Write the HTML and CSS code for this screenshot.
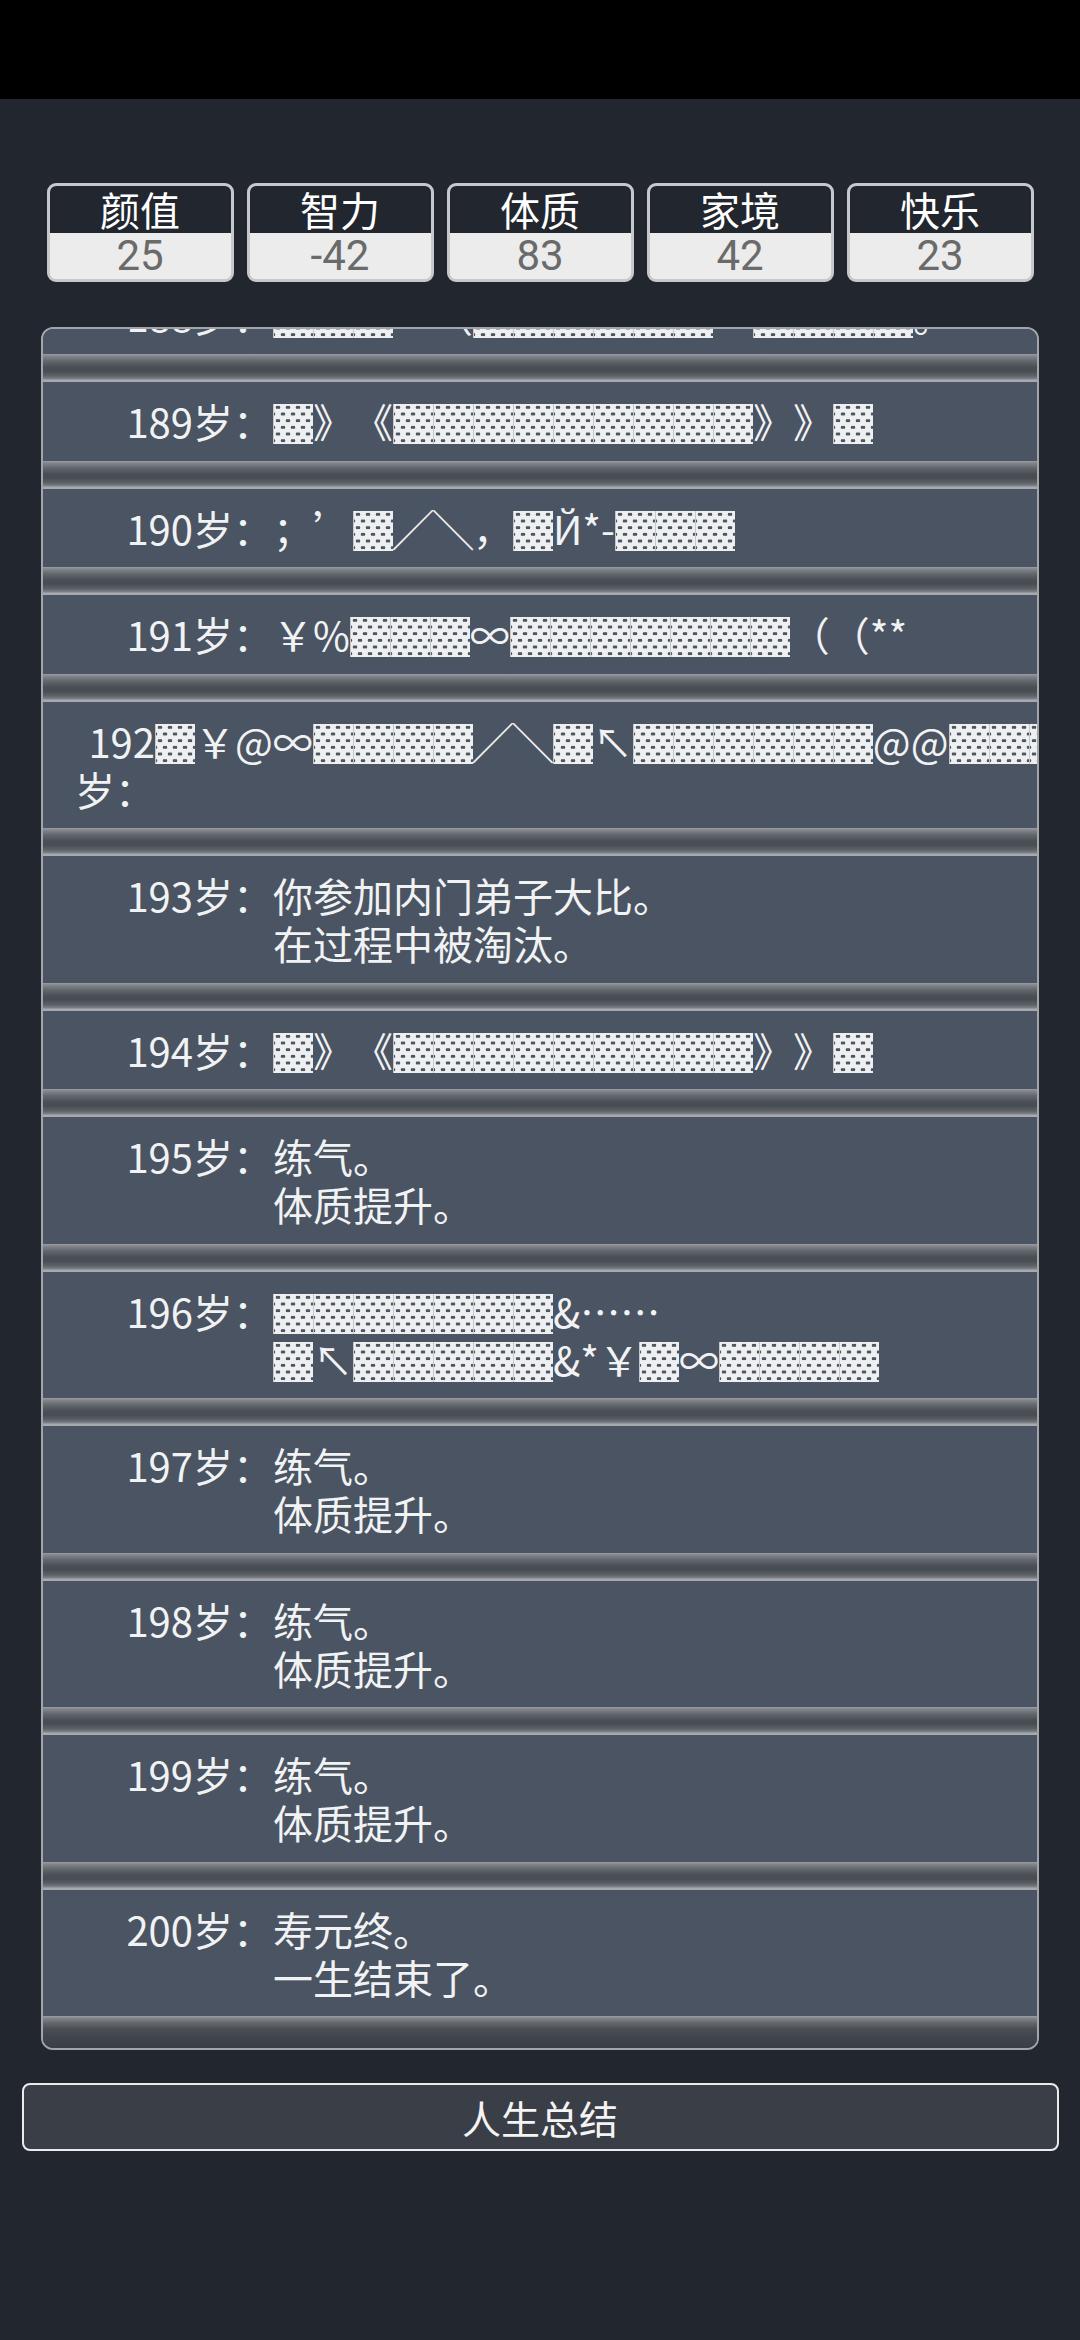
FILE: index.html
```html
<!DOCTYPE html>
<html lang="zh-CN">
<head>
<meta charset="utf-8">
<title>人生重开</title>
<link rel="stylesheet" href="styles.css">
</head>
<body>
<div class="statusbar"></div>
<main class="page">
  <section class="stats">
    <div class="stat"><div class="stat-name">颜值</div><div class="stat-value">25</div></div>
    <div class="stat"><div class="stat-name">智力</div><div class="stat-value">-42</div></div>
    <div class="stat"><div class="stat-name">体质</div><div class="stat-value">83</div></div>
    <div class="stat"><div class="stat-name">家境</div><div class="stat-value">42</div></div>
    <div class="stat"><div class="stat-name">快乐</div><div class="stat-value">23</div></div>
  </section>

  <ul class="panel">
    <li class="event"><div class="row"><span class="age">188岁：</span><span class="text"><span class="shade">▓▓▓</span>　（<span class="shade">▓▓▓▓▓▓</span>　<span class="shade">▓▓▓▓</span>。</span></div></li>
    <li class="event"><div class="row"><span class="age">189岁：</span><span class="text"><span class="shade">▓</span>》《<span class="shade">▓▓▓▓▓▓▓▓▓</span>》》<span class="shade">▓</span></span></div></li>
    <li class="event"><div class="row"><span class="age">190岁：</span><span class="text">；’<span class="shade">▓</span>╱╲，<span class="shade">▓</span>Й*-<span class="shade">▓▓▓</span></span></div></li>
    <li class="event"><div class="row"><span class="age">191岁：</span><span class="text">￥%<span class="shade">▓▓▓</span>∞<span class="shade">▓▓▓▓▓▓▓</span>（（**</span></div></li>
    <li class="event"><div class="row"><span class="age">192岁：</span><span class="text"><span class="shade">▓</span>￥@∞<span class="shade">▓▓▓▓</span>╱╲<span class="shade">▓</span>↖<span class="shade">▓▓▓▓▓▓</span>@@<span class="shade">▓▓▓▓▓▓</span></span></div></li>
    <li class="event"><div class="row"><span class="age">193岁：</span><span class="text">你参加内门弟子大比。<br>在过程中被淘汰。</span></div></li>
    <li class="event"><div class="row"><span class="age">194岁：</span><span class="text"><span class="shade">▓</span>》《<span class="shade">▓▓▓▓▓▓▓▓▓</span>》》<span class="shade">▓</span></span></div></li>
    <li class="event"><div class="row"><span class="age">195岁：</span><span class="text">练气。<br>体质提升。</span></div></li>
    <li class="event"><div class="row"><span class="age">196岁：</span><span class="text"><span class="shade">▓▓▓▓▓▓▓</span>&amp;……<br><span class="shade">▓</span>↖<span class="shade">▓▓▓▓▓</span>&amp;*￥<span class="shade">▓</span>∞<span class="shade">▓▓▓▓</span></span></div></li>
    <li class="event"><div class="row"><span class="age">197岁：</span><span class="text">练气。<br>体质提升。</span></div></li>
    <li class="event"><div class="row"><span class="age">198岁：</span><span class="text">练气。<br>体质提升。</span></div></li>
    <li class="event"><div class="row"><span class="age">199岁：</span><span class="text">练气。<br>体质提升。</span></div></li>
    <li class="event"><div class="row"><span class="age">200岁：</span><span class="text">寿元终。<br>一生结束了。</span></div></li>
  </ul>

  <button class="summary" type="button">人生总结</button>
</main>
</body>
</html>
```

FILE: styles.css
```css
* {
  box-sizing: border-box;
}

html,
body {
  margin: 0;
  padding: 0;
}

body {
  width: 1080px;
  height: 2340px;
  overflow: hidden;
  background: #22262e;
  color: #f1f2f3;
  font-family: "Noto Sans CJK SC", sans-serif;
  text-spacing-trim: space-all;
}

.statusbar {
  height: 99px;
  background: #000;
}

.page {
  display: flex;
  flex-direction: column;
  align-items: center;
}

/* ---------- attribute boxes ---------- */
.stats {
  display: flex;
  justify-content: center;
  gap: 13px;
  margin-top: 84px;
}

.stat {
  width: 187px;
  height: 99px;
  border: 3px solid #c6c8cb;
  border-radius: 9px;
  background: #ececec;
  display: flex;
  flex-direction: column;
}

.stat-name {
  height: 47px;
  flex: none;
  border-radius: 6px 6px 0 0;
  background: #22262e;
  color: #fff;
  font-size: 40px;
  line-height: 46px;
  text-align: center;
}

.stat-value {
  flex: 1;
  border-radius: 0 0 6px 6px;
  background: #ececec;
  color: #6a6a6a;
  font-family: Roboto, "Noto Sans CJK SC", sans-serif;
  font-weight: 400;
  font-size: 42px;
  line-height: 46px;
  text-align: center;
}

/* ---------- event list ---------- */
.panel {
  width: 998px;
  height: 1723px;
  margin: 45px 0 0;
  padding: 0;
  list-style: none;
  border: 2px solid #a2a5aa;
  border-radius: 12px;
  overflow: hidden;
  background: #3a3e46;
  display: flex;
  flex-direction: column;
  justify-content: flex-end;
}

.event {
  flex: none;
  padding-bottom: 28px;
  background: linear-gradient(to bottom,
      #9a9ea3 0,
      #83878d 2px,
      #62666d 7px,
      #4a4e55 13px,
      #484c53 17px,
      #5e6269 22px,
      #80848a 25px,
      #a6a9ad 26px,
      #a6a9ad 28px) left bottom / 100% 28px no-repeat #4a5462;
}

.event:last-child {
  padding-bottom: 32px;
  background: linear-gradient(to bottom,
      #9a9ea3 0,
      #83878d 2px,
      #62666d 7px,
      #4a4e55 13px,
      #41454c 20px,
      #3a3e46 32px) left bottom / 100% 32px no-repeat #4a5462;
}

.row {
  display: flex;
  padding: 15px 0 15.5px 32px;
  font-size: 40px;
  line-height: 48px;
}

.age {
  flex: 0 1 198px;
  text-align: right;
}

.text {
  white-space: nowrap;
}

/* the "▓" shade blocks, drawn as a light dotted tile */
.shade {
  display: inline-block;
  height: 40px;
  line-height: 40px;
  vertical-align: -3px;
  color: transparent;
  background-color: #eeeff0;
  background-image:
    linear-gradient(to right, #c4c7cb 0, #c4c7cb 1px, transparent 1px),
    radial-gradient(ellipse 2.6px 1.6px at 5px 3.4px, #4d5561 85%, transparent 100%),
    radial-gradient(ellipse 2.6px 1.6px at 5px 3.4px, #4d5561 85%, transparent 100%);
  background-size: 40px 100%, 10px 13.33px, 10px 13.33px;
  background-position: 0 0, 0 0, 5px 6.67px;
}

/* ---------- summary button ---------- */
.summary {
  width: 1037px;
  height: 68px;
  margin-top: 33px;
  padding: 0;
  border: 2.5px solid #ececec;
  border-radius: 8px;
  background: #3a3e47;
  color: #f4f4f4;
  font-family: "Noto Sans CJK SC", sans-serif;
  font-size: 39px;
  line-height: 62px;
  text-align: center;
}
```
